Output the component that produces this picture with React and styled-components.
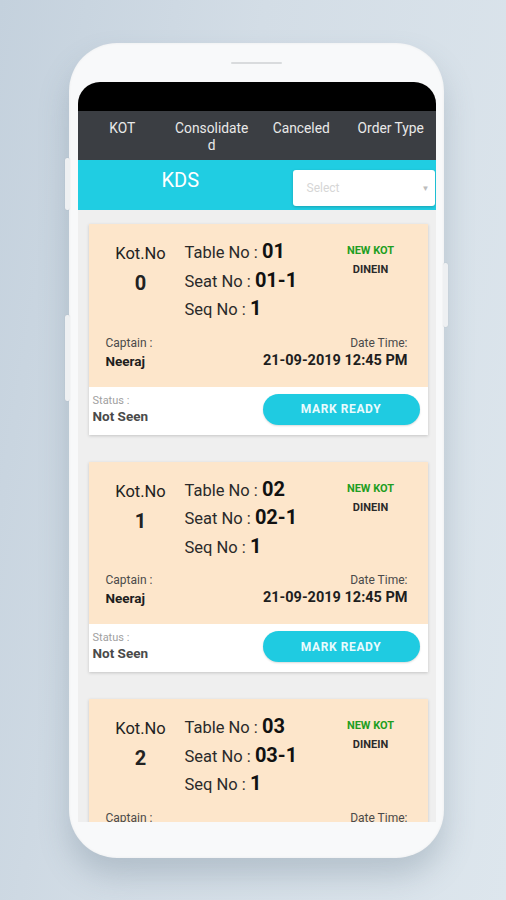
import React from "react";
import styled, { createGlobalStyle } from "styled-components";

const GlobalStyle = createGlobalStyle`
  html, body { margin: 0; padding: 0; }
  body { font-family: Roboto, "Noto Sans", Arial, sans-serif; }
  * { box-sizing: border-box; }
`;

const Page = styled.div`
  width: 506px;
  height: 900px;
  overflow: hidden;
  background: linear-gradient(100deg, #c4d1dd 0%, #d3dde6 40%, #dde6ed 100%);
  display: flex;
  justify-content: flex-start;
  align-items: flex-start;
  padding: 43px 0 0 69px;
`;

const Phone = styled.div`
  position: relative;
  width: 375px;
  height: 815px;
  border-radius: 48px;
  background: #f8f9fa;
  box-shadow: 0 18px 30px rgba(90, 110, 130, 0.28), inset 0 0 3px rgba(0, 0, 0, 0.06);
  display: flex;
  flex-direction: column;
  align-items: center;
  padding: 19px 8px 0 8px;
`;

const Speaker = styled.div`
  width: 51px;
  height: 2px;
  border-radius: 1px;
  background: #d9dbdd;
  margin-bottom: 18px;
`;

const SideButton = styled.div`
  position: absolute;
  top: ${(p) => p.$top}px;
  height: ${(p) => p.$h}px;
  ${(p) => (p.$right ? "right: -4px;" : "left: -4px;")}
  width: 5px;
  background: #eef0f2;
  border-radius: 2px;
  box-shadow: 0 0 1px rgba(0, 0, 0, 0.15);
`;

const Screen = styled.div`
  width: 358px;
  height: 740px;
  border-radius: 22px 22px 0 0;
  overflow: hidden;
  background: #efefef;
  display: flex;
  flex-direction: column;
`;

const StatusBar = styled.div`
  height: 29px;
  background: #000;
  flex-shrink: 0;
`;

const TabBar = styled.div`
  height: 49px;
  background: #3b3e43;
  display: grid;
  grid-template-columns: repeat(4, 1fr);
  flex-shrink: 0;
  padding-top: 9px;
`;

const Tab = styled.div`
  color: #e9e9e9;
  font-size: 13.8px;
  line-height: 17px;
  text-align: center;
`;

const KdsBar = styled.div`
  height: 50px;
  background: #20cde2;
  display: flex;
  align-items: flex-start;
  flex-shrink: 0;
  padding-top: 8px;
`;

const KdsTitle = styled.div`
  width: 215px;
  color: #fff;
  font-size: 20px;
  line-height: 24px;
  padding-left: 84px;
`;

const SelectBox = styled.div`
  margin-top: 2px;
  width: 142px;
  height: 36px;
  background: #fff;
  border-radius: 3px;
  box-shadow: 0 1px 3px rgba(0, 0, 0, 0.2);
  display: flex;
  align-items: center;
  justify-content: space-between;
  padding: 0 5px 0 14px;
  color: #d6d6d6;
  font-size: 12px;
`;

const Caret = styled.span`
  color: #bcbcbc;
  font-size: 8px;
`;

const Content = styled.div`
  padding: 14px 8px 0 11px;
  display: flex;
  flex-direction: column;
  gap: 27px;
`;

const Card = styled.div`
  width: 339px;
  flex-shrink: 0;
  box-shadow: 0 1px 3px rgba(0, 0, 0, 0.18);
  background: #fff;
`;

const CardTop = styled.div`
  background: #fde6cb;
  padding: 14px 20px 16px 17px;
  display: flex;
  flex-direction: column;
`;

const InfoRow = styled.div`
  display: flex;
  align-items: flex-start;
`;

const KotCol = styled.div`
  width: 72px;
  margin-left: -1px;
  text-align: center;
  color: #222;
  display: flex;
  flex-direction: column;
  padding-top: 2px;
`;

const KotLabel = styled.div`
  font-size: 16.5px;
  line-height: 28px;
`;

const KotNum = styled.div`
  font-size: 20px;
  font-weight: 700;
  line-height: 30px;
`;

const DetailCol = styled.div`
  flex: 1;
  margin-left: 8px;
  display: flex;
  flex-direction: column;
`;

const DetailLine = styled.div`
  font-size: 16.5px;
  line-height: 27.5px;
  color: #2a2a2a;
  white-space: nowrap;
`;

const DetailValue = styled.span`
  font-size: 20px;
  font-weight: 700;
  color: #111;
`;

const TypeCol = styled.div`
  width: 74px;
  margin-top: 6px;
  text-align: center;
  display: flex;
  flex-direction: column;
  gap: 5px;
  font-size: 11px;
  font-weight: 700;
  line-height: 14px;
`;

const TypeTag = styled.div`
  color: ${(p) => p.$color};
`;

const MetaRow = styled.div`
  display: flex;
  justify-content: space-between;
  margin-top: 11px;
`;

const MetaBlock = styled.div`
  display: flex;
  flex-direction: column;
  align-items: ${(p) => (p.$right ? "flex-end" : "flex-start")};
`;

const MetaLabel = styled.div`
  font-size: 12px;
  line-height: 16px;
  color: #4a4a4a;
`;

const MetaValue = styled.div`
  font-size: ${(p) => (p.$big ? 14.5 : 13.5)}px;
  font-weight: 700;
  line-height: 20px;
  color: #1e1e1e;
`;

const CardBottom = styled.div`
  height: 48px;
  display: flex;
  align-items: center;
  justify-content: space-between;
  padding: 0 8px 0 4px;
`;

const StatusBlock = styled.div`
  display: flex;
  flex-direction: column;
  margin-top: -3px;
`;

const StatusLabel = styled.div`
  font-size: 11px;
  line-height: 14px;
  color: #a0a0a0;
`;

const StatusValue = styled.div`
  font-size: 13.5px;
  font-weight: 700;
  line-height: 17px;
  color: #4a4a4a;
`;

const ReadyButton = styled.button`
  width: 157px;
  height: 31px;
  border: none;
  border-radius: 16px;
  background: #1fcbe1;
  color: #e9fbfe;
  font-family: Roboto, Arial, sans-serif;
  font-size: 12px;
  font-weight: 700;
  letter-spacing: 0.6px;
  box-shadow: 0 1px 2px rgba(0, 0, 0, 0.15);
  margin-top: -3px;
`;

const orders = [
  { kot: 0, table: "01", seat: "01-1", seq: "1" },
  { kot: 1, table: "02", seat: "02-1", seq: "1" },
  { kot: 2, table: "03", seat: "03-1", seq: "1" },
];

function OrderCard({ o }) {
  return (
    <Card>
      <CardTop>
        <InfoRow>
          <KotCol>
            <KotLabel>Kot.No</KotLabel>
            <KotNum>{o.kot}</KotNum>
          </KotCol>
          <DetailCol>
            <DetailLine>
              Table No : <DetailValue>{o.table}</DetailValue>
            </DetailLine>
            <DetailLine>
              Seat No : <DetailValue>{o.seat}</DetailValue>
            </DetailLine>
            <DetailLine>
              Seq No : <DetailValue>{o.seq}</DetailValue>
            </DetailLine>
          </DetailCol>
          <TypeCol>
            <TypeTag $color="#1f9e22">NEW KOT</TypeTag>
            <TypeTag $color="#2a2a2a">DINEIN</TypeTag>
          </TypeCol>
        </InfoRow>
        <MetaRow>
          <MetaBlock>
            <MetaLabel>Captain :</MetaLabel>
            <MetaValue>Neeraj</MetaValue>
          </MetaBlock>
          <MetaBlock $right>
            <MetaLabel>Date Time:</MetaLabel>
            <MetaValue $big>21-09-2019 12:45 PM</MetaValue>
          </MetaBlock>
        </MetaRow>
      </CardTop>
      <CardBottom>
        <StatusBlock>
          <StatusLabel>Status :</StatusLabel>
          <StatusValue>Not Seen</StatusValue>
        </StatusBlock>
        <ReadyButton>MARK READY</ReadyButton>
      </CardBottom>
    </Card>
  );
}

export default function App() {
  return (
    <>
      <GlobalStyle />
      <Page>
        <Phone>
          <SideButton $top={115} $h={52} />
          <SideButton $top={272} $h={86} />
          <SideButton $right $top={220} $h={64} />
          <Speaker />
          <Screen>
            <StatusBar />
            <TabBar>
              <Tab>KOT</Tab>
              <Tab>
                Consolidate
                <br />d
              </Tab>
              <Tab>Canceled</Tab>
              <Tab>Order Type</Tab>
            </TabBar>
            <KdsBar>
              <KdsTitle>KDS</KdsTitle>
              <SelectBox>
                <span>Select</span>
                <Caret>▼</Caret>
              </SelectBox>
            </KdsBar>
            <Content>
              {orders.map((o) => (
                <OrderCard key={o.kot} o={o} />
              ))}
            </Content>
          </Screen>
        </Phone>
      </Page>
    </>
  );
}
